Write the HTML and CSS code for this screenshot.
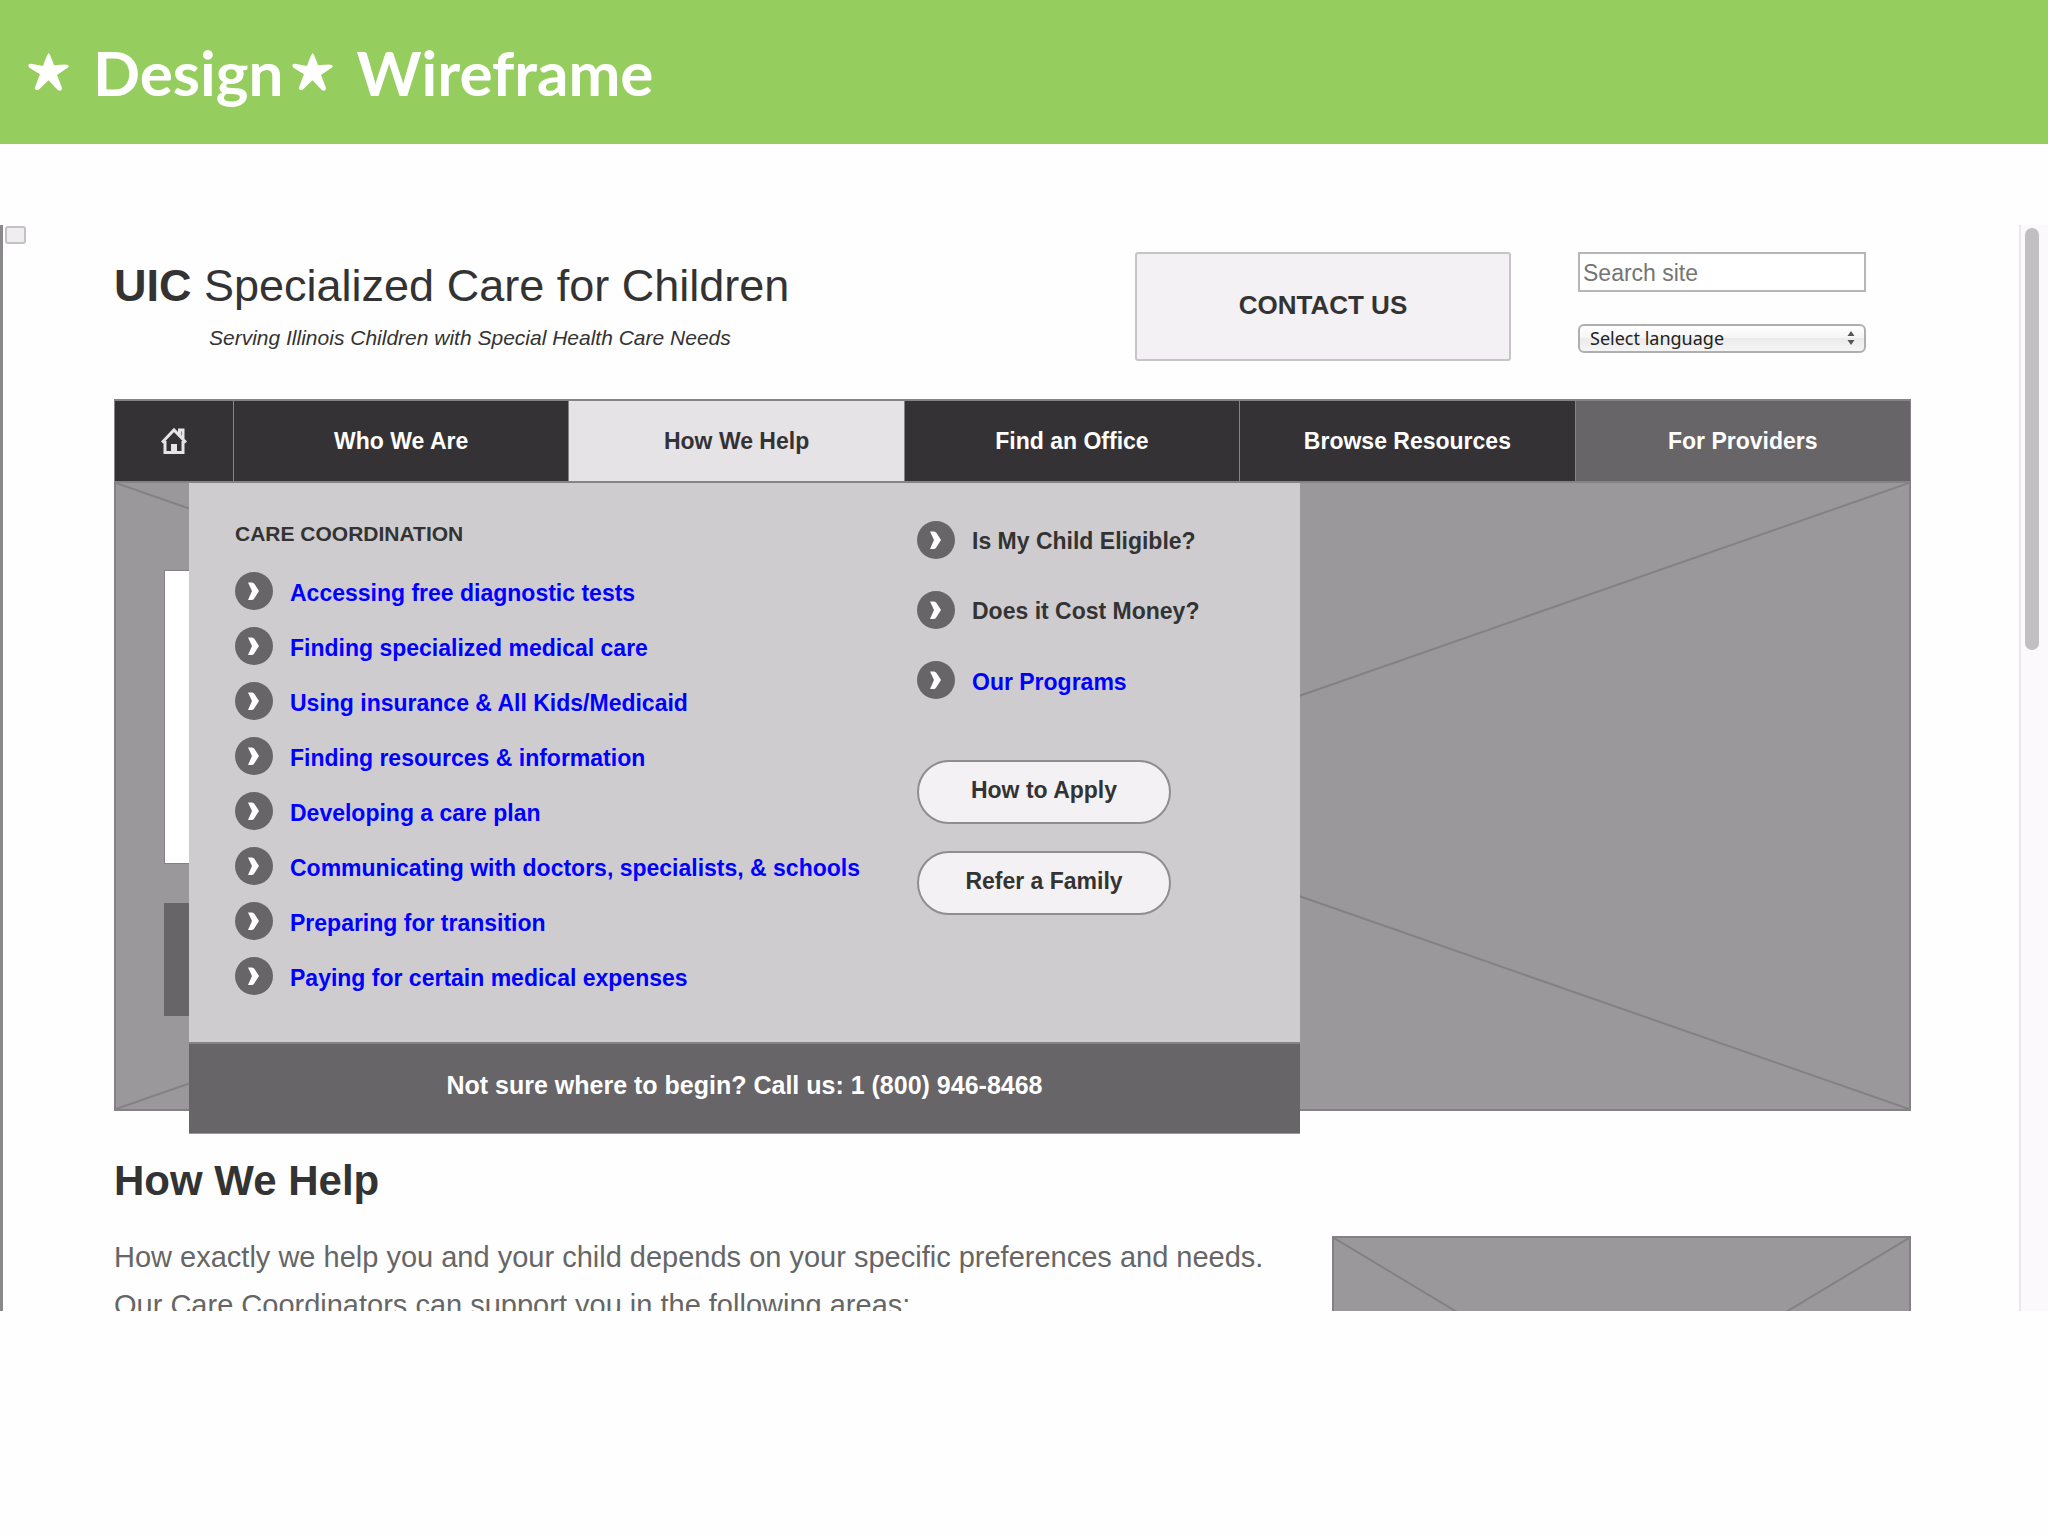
FILE: index.html
```html
<!DOCTYPE html>
<html lang="en">
<head>
<meta charset="utf-8">
<meta name="viewport" content="width=device-width, initial-scale=1">
<title>Design Wireframe</title>
<link rel="stylesheet" href="styles.css">
</head>
<body>
<svg class="defs" width="0" height="0" aria-hidden="true">
  <symbol id="star" viewBox="0 0 41 50" preserveAspectRatio="none">
    <path d="M20.500 0 Q22 1 26 16 L37 15 Q42 15 40 19 L29 29 L34 46 Q34 51 30 49 L20.500 36 L11 48 Q6 50 7 45 L12 28 L1 19 Q-1 14 3 14 L15 17 Q19 2 20.500 0 Z" fill="currentColor"/>
  </symbol>
  <symbol id="chevron" viewBox="0 0 38 38">
    <circle cx="19" cy="19" r="19" fill="#676568"/>
    <path d="M13 10.500h4q1.500 0 2.500 1.500l4.500 7-4.500 7q-1 2-2.500 2h-4l4-9z" fill="#fff"/>
  </symbol>
</svg>

<header class="slide-header">
  <h1 class="slide-title">
    <svg class="star"><use href="#star"/></svg>
    <span class="word">Design</span>
    <svg class="star"><use href="#star"/></svg>
    <span class="word">Wireframe</span>
  </h1>
</header>

<main class="viewport">
  <span class="corner"></span>
  <div class="page">
    <header class="site-header">
      <div class="brand">
        <p class="brand-name"><b>UIC</b> Specialized Care for Children</p>
        <p class="brand-tag">Serving Illinois Children with Special Health Care Needs</p>
      </div>
      <button class="contact" type="button">CONTACT US</button>
      <form class="tools">
        <input class="search" type="text" placeholder="Search site" aria-label="Search site">
        <div class="language">
          <select class="language-select" aria-label="Select language"><option>Select language</option></select>
          <svg class="arrows" viewBox="0 0 8 14"><path d="M4 0l3.500 5h-7zM4 14l3.500-5h-7z" fill="#555"/></svg>
        </div>
      </form>
    </header>

    <nav class="nav">
      <a class="nav-item" href="#" aria-label="Home">
        <svg class="home" viewBox="0 0 26 28" fill="none" stroke="#e6e4e7" stroke-width="3"><path d="M1 15.500L13 3l12 12.500M4 14v11.500h18V14M18.500 8V3h3.500v9"/><path d="M13 26v-9" stroke-width="6"/></svg>
      </a>
      <a class="nav-item" href="#">Who We Are</a>
      <a class="nav-item nav-item-open" href="#">How We Help</a>
      <a class="nav-item" href="#">Find an Office</a>
      <a class="nav-item" href="#">Browse Resources</a>
      <a class="nav-item nav-item-alt" href="#">For Providers</a>
    </nav>

    <section class="hero">
      <svg class="cross" viewBox="0 0 100 100" preserveAspectRatio="none"><path d="M0 0L100 100M100 0L0 100"/></svg>
      <div class="hero-card"></div>
      <div class="hero-button"></div>
      <div class="menu">
        <div class="menu-body">
          <div class="menu-main">
            <h2 class="menu-title">CARE COORDINATION</h2>
            <ul class="links">
              <li><svg class="chevron"><use href="#chevron"/></svg><a href="#">Accessing free diagnostic tests</a></li>
              <li><svg class="chevron"><use href="#chevron"/></svg><a href="#">Finding specialized medical care</a></li>
              <li><svg class="chevron"><use href="#chevron"/></svg><a href="#">Using insurance &amp; All Kids/Medicaid</a></li>
              <li><svg class="chevron"><use href="#chevron"/></svg><a href="#">Finding resources &amp; information</a></li>
              <li><svg class="chevron"><use href="#chevron"/></svg><a href="#">Developing a care plan</a></li>
              <li><svg class="chevron"><use href="#chevron"/></svg><a href="#">Communicating with doctors, specialists, &amp; schools</a></li>
              <li><svg class="chevron"><use href="#chevron"/></svg><a href="#">Preparing for transition</a></li>
              <li><svg class="chevron"><use href="#chevron"/></svg><a href="#">Paying for certain medical expenses</a></li>
            </ul>
          </div>
          <div class="menu-side">
            <ul class="links links-wide">
              <li><svg class="chevron"><use href="#chevron"/></svg><a class="plain" href="#">Is My Child Eligible?</a></li>
              <li><svg class="chevron"><use href="#chevron"/></svg><a class="plain" href="#">Does it Cost Money?</a></li>
              <li><svg class="chevron"><use href="#chevron"/></svg><a href="#">Our Programs</a></li>
            </ul>
            <button class="pill" type="button">How to Apply</button>
            <button class="pill" type="button">Refer a Family</button>
          </div>
        </div>
        <p class="menu-foot">Not sure where to begin? Call us: 1 (800) 946-8468</p>
      </div>
    </section>

    <section class="content">
      <div class="copy">
        <h2 class="copy-title">How We Help</h2>
        <p class="copy-text">How exactly we help you and your child depends on your specific preferences and needs. Our Care Coordinators can support you in the following areas:</p>
      </div>
      <div class="picture">
        <svg class="cross" viewBox="0 0 100 100" preserveAspectRatio="none"><path d="M0 0L100 100M100 0L0 100"/></svg>
      </div>
    </section>
  </div>
  <div class="scrollbar"><div class="thumb"></div></div>
</main>
</body>
</html>
```
FILE: styles.css
```css
* { box-sizing: border-box; }

body {
  margin: 0;
  background: #fefefe;
  color: #333;
  font-family: "Liberation Sans", Arial, sans-serif;
}

h1, h2, p, ul { margin: 0; padding: 0; }
ul { list-style: none; }
a { text-decoration: none; }
button, input, select { font-family: inherit; }
.defs { position: absolute; }

/* Slide title */
.slide-header {
  padding: 0 28px;
  background: #96cd5f;
  color: #fff;
}
.slide-title {
  display: flex;
  align-items: center;
  height: 144px;
  font-family: Lato, sans-serif;
  font-size: 62px;
  font-weight: 700;
}
.star { width: 41px; height: 38px; }
.word { margin-left: 24px; }
.word + .star { margin-left: 8px; }

/* Browser window */
.viewport {
  display: flex;
  position: relative;
  height: 1086px;
  margin-top: 81px;
  overflow: hidden;
  border-left: 3px solid #8a888b;
}
.corner {
  position: absolute;
  top: 1px;
  left: 2px;
  width: 21px;
  height: 18px;
  border: 2px solid #c3c1c4;
  border-radius: 3px;
  background: #efedf0;
}
.page {
  flex: 1;
  padding: 27px 108px 0 111px;
}
.scrollbar {
  width: 29px;
  padding: 3px 9px 0 4px;
  border-left: 2px solid #eae8ec;
  background: #fbf9fc;
}
.thumb {
  height: 422px;
  border-radius: 7px;
  background: #c1bfc2;
}

/* Site header */
.site-header {
  display: flex;
  height: 147px;
  padding-right: 45px;
}
.brand { flex: 1; }
.brand-name {
  padding-top: 8px;
  font-size: 45px;
  line-height: 52px;
}
.brand-tag {
  padding: 12px 0 0 95px;
  font-size: 21px;
  font-style: italic;
  line-height: 28px;
}
.contact {
  width: 376px;
  height: 109px;
  padding-bottom: 4px;
  border: 2px solid #c6c4c7;
  border-radius: 3px;
  background: #f3f1f4;
  color: #333;
  font-size: 26px;
  font-weight: 700;
}
.tools {
  display: flex;
  flex-direction: column;
  gap: 32px;
  width: 288px;
  margin-left: 67px;
}
.search {
  height: 40px;
  padding: 2px 3px 0;
  border: 2px solid #b7b5b8;
  background: #fff;
  font-size: 23px;
}
.search::placeholder { color: #757575; }
.language { position: relative; }
.language-select {
  display: block;
  width: 100%;
  height: 29px;
  padding: 0 10px 2px;
  appearance: none;
  border: 2px solid #b0aeb1;
  border-radius: 6px;
  background: linear-gradient(#fff, #f5f5f5 50%, #ebebeb 50%, #f5f5f5);
  color: #222;
  font-family: "Noto Sans", sans-serif;
  font-size: 18px;
}
.arrows {
  position: absolute;
  top: 7px;
  right: 11px;
  width: 8px;
  height: 14px;
}

/* Navigation */
.nav {
  display: grid;
  grid-template-columns: 118px repeat(5, 1fr);
  height: 84px;
  border: 2px solid #858386;
  border-left-width: 1px;
  border-right-width: 1px;
}
.nav-item {
  display: flex;
  align-items: center;
  justify-content: center;
  background: #343235;
  color: #fff;
  font-size: 23px;
  font-weight: 700;
}
.nav-item + .nav-item { border-left: 1px solid #858386; }
.nav-item-open { background: #e5e3e6; color: #343235; }
.nav-item-alt { background: #676568; }
.home { width: 26px; height: 28px; }

/* Hero with open menu */
.hero {
  position: relative;
  height: 628px;
  border: 2px solid #838184;
  border-top: 0;
  background: #9a989b;
}
.cross {
  display: block;
  width: 100%;
  height: 100%;
  fill: none;
  stroke: #838184;
  stroke-width: 2px;
}
.cross path { vector-effect: non-scaling-stroke; }
.hero-card, .hero-button {
  position: absolute;
  left: 48px;
  width: 200px;
}
.hero-card { top: 87px; height: 294px; border: 1px solid #838184; background: #fff; }
.hero-button { top: 420px; height: 113px; background: #676568; }
.menu {
  position: absolute;
  top: 0;
  left: 73px;
  width: 1111px;
}
.menu-body {
  display: flex;
  height: 559px;
  padding: 37px 46px 0;
  background: #cecccf;
}
.menu-main { width: 682px; }
.menu-title {
  font-size: 21px;
  line-height: 28px;
}
.menu-main .links { padding-top: 15px; }
.links li {
  display: flex;
  align-items: center;
  gap: 17px;
  height: 55px;
}
.links-wide li { height: 70px; }
.links-wide { margin-top: -15px; }
.links a {
  padding-top: 4px;
  color: #00f;
  font-size: 23px;
  font-weight: 700;
  line-height: 28px;
}
.links a.plain { padding-top: 2px; color: #333; }
.chevron { width: 38px; height: 38px; }
.pill {
  display: block;
  width: 254px;
  height: 64px;
  margin-top: 45px;
  padding-bottom: 4px;
  border: 2px solid #8f8d90;
  border-radius: 32px;
  background: #f3f1f4;
  color: #333;
  font-size: 23px;
  font-weight: 700;
}
.pill + .pill { margin-top: 27px; }
.menu-foot {
  height: 92px;
  border-top: 2px solid #858386;
  border-bottom: 1px solid #9a989b;
  background: #676568;
  color: #fff;
  font-size: 25px;
  font-weight: 700;
  line-height: 82px;
  text-align: center;
}

/* Content */
.content {
  display: flex;
  gap: 40px;
}
.copy { flex: 1; }
.copy-title {
  padding-top: 46px;
  font-size: 42px;
  line-height: 48px;
}
.copy-text {
  padding-top: 28px;
  color: #666;
  font-size: 29px;
  line-height: 48px;
}
.picture {
  width: 579px;
  height: 350px;
  margin-top: 125px;
  border: 2px solid #838184;
  background: #9a989b;
}
```
